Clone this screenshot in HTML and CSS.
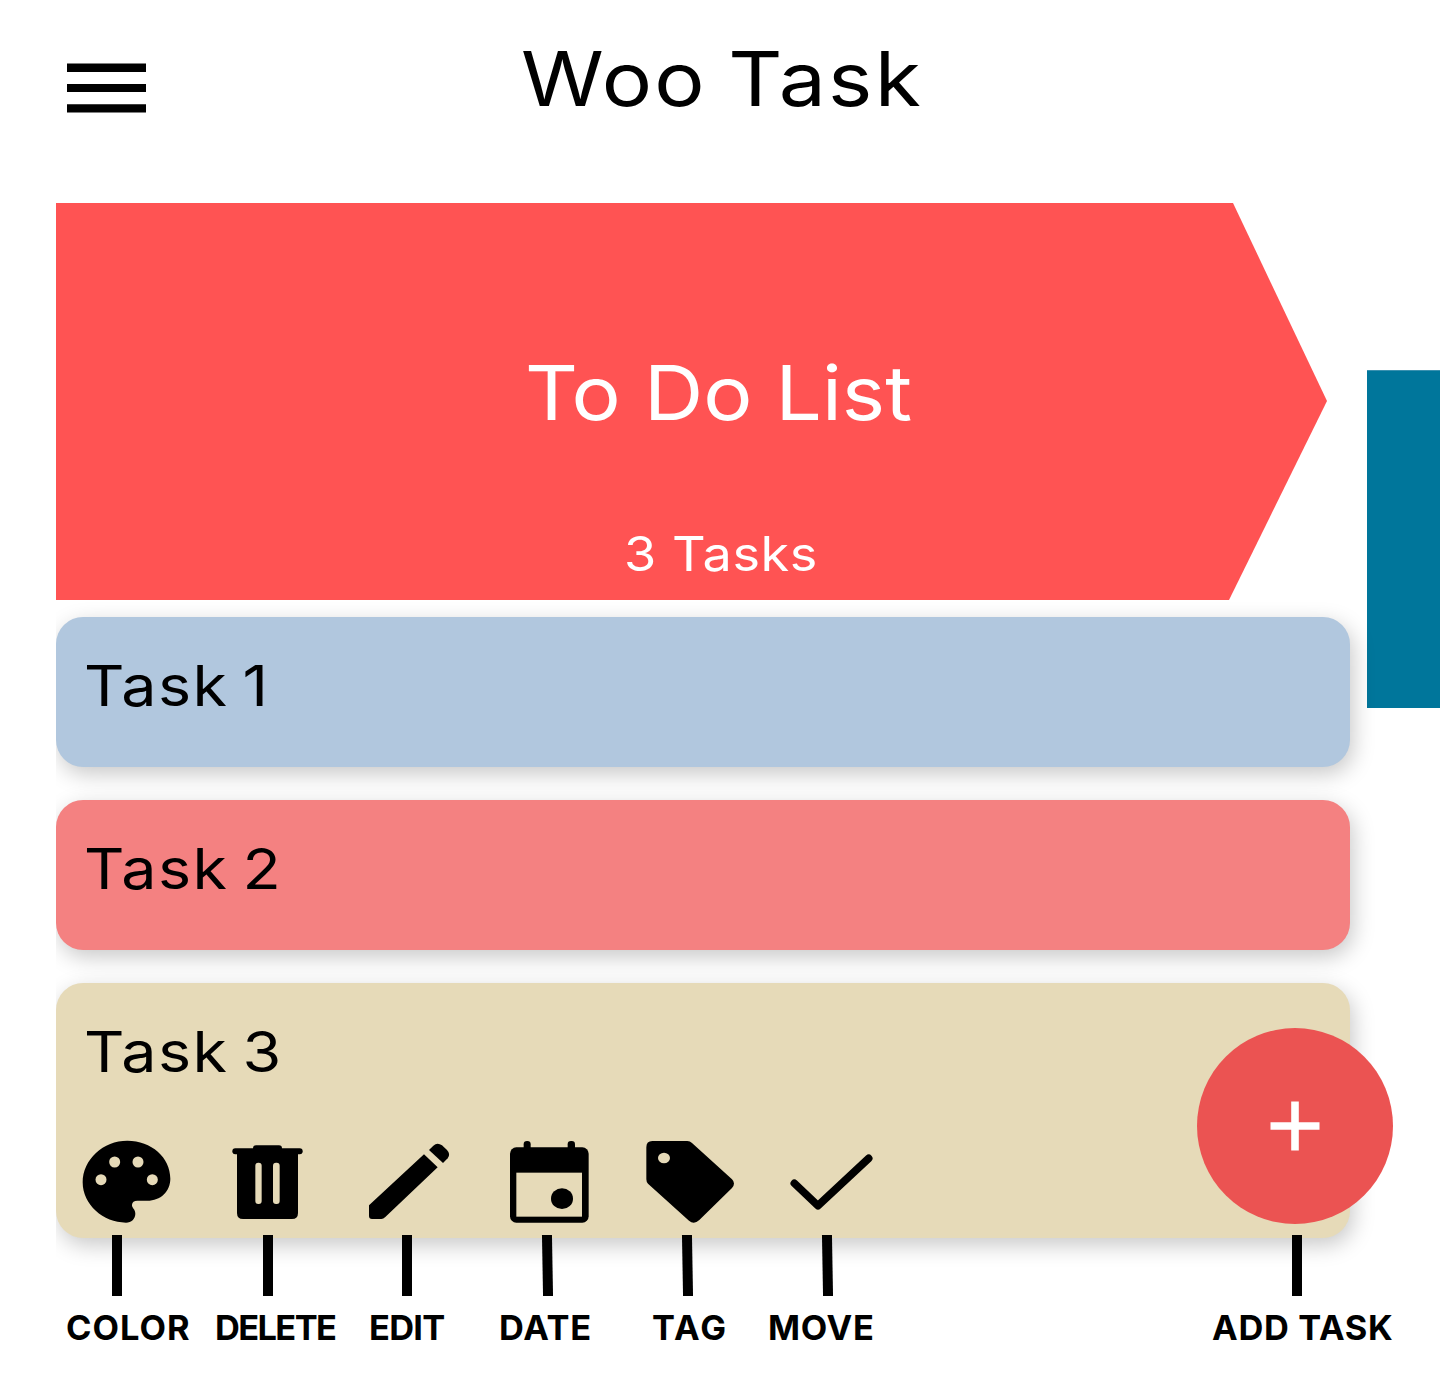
FILE: index.html
```html
<!DOCTYPE html>
<html lang="en">
<head>
<meta charset="utf-8">
<title>Woo Task</title>
<link rel="stylesheet" href="styles.css">
</head>
<body>
<div class="app">
  <header class="header">
    <svg class="menu" viewBox="0 0 79 50"><path d="M0 .5H79V9H0ZM0 21H79V29H0ZM0 41.2H79V49.5H0Z"/></svg>
    <h1 class="title">Woo Task</h1>
  </header>
  <main class="board">
    <div class="column">
      <section class="banner">
        <h2 class="banner-title">To Do List</h2>
        <p class="banner-count">3 Tasks</p>
      </section>
      <div class="tasks">
        <article class="task task-blue"><h3 class="task-name">Task 1</h3></article>
        <article class="task task-pink"><h3 class="task-name">Task 2</h3></article>
        <article class="task task-sand">
          <h3 class="task-name">Task 3</h3>
          <div class="tools">
            <svg class="tool" width="92" viewBox="120 60 276 252">
              <path d="M262 62C190 62 128 118 128 187C128 254 190 308 258 308C274 308 286 296 286 281C286 266 275 264 276 254C277 246 282 242 292 242H322C362 242 391 214 391 176C391 112 334 62 262 62Z"/>
              <g class="hole"><circle cx="224" cy="126" r="16.5"/><circle cx="294" cy="126" r="16.5"/><circle cx="183" cy="179" r="16.5"/><circle cx="337" cy="179" r="16.5"/></g>
            </svg>
            <svg class="tool" width="75" viewBox="570 60 225 252">
              <rect x="639" y="76" width="87" height="24" rx="9"/><rect x="577" y="85" width="211" height="18" rx="9"/>
              <path d="M591 95H774V279Q774 297 756 297H609Q591 297 591 279Z"/>
              <g class="hole"><rect x="646" y="128" width="19" height="124" rx="9"/><rect x="699" y="128" width="20" height="124" rx="9"/></g>
            </svg>
            <svg class="tool" width="87" viewBox="75 60 261 252">
              <path d="M87 256L252 103L293 142L136 291Q130 297 124 297H96Q87 297 87 288Z"/>
              <path d="M267 90L280 77Q292 66 306 76L321 90Q333 103 323 115L309 129Z"/>
            </svg>
            <svg class="tool" width="83" viewBox="504 60 249 252">
              <rect x="551" y="63" width="21" height="40" rx="10"/><rect x="683" y="63" width="22" height="40" rx="10"/>
              <rect x="510" y="82" width="236" height="226" rx="19"/>
              <rect class="hole" x="529" y="158" width="197" height="132"/>
              <ellipse cx="666" cy="236" rx="33" ry="31"/>
            </svg>
            <svg class="tool" width="92" viewBox="72 60 276 252">
              <path d="M97 63H202Q210 63 216 69L336 178Q348 190 336 204L238 300Q222 315 207 302L84 191Q79 186 79 178V82Q79 63 97 63Z"/>
              <ellipse class="hole" cx="132" cy="114" rx="18" ry="16"/>
            </svg>
            <svg class="tool" width="87" viewBox="504 60 261 252">
              <path class="check" d="M523 190L594 257L746 115"/>
            </svg>
          </div>
        </article>
      </div>
    </div>
    <aside class="next-list"></aside>
  </main>
  <footer class="legend">
    <div class="callout color"><i class="tick"></i><span>COLOR</span></div>
    <div class="callout delete"><i class="tick"></i><span>DELETE</span></div>
    <div class="callout edit"><i class="tick"></i><span>EDIT</span></div>
    <div class="callout date"><i class="tick slanted"></i><span>DATE</span></div>
    <div class="callout tag"><i class="tick slanted"></i><span>TAG</span></div>
    <div class="callout move"><i class="tick slanted"></i><span>MOVE</span></div>
    <div class="callout add"><i class="tick"></i><span>ADD TASK</span></div>
  </footer>
  <button class="fab" aria-label="Add task">
    <svg width="50" height="50" viewBox="0 0 50 50"><path d="M21.2 .5H28.8V21.3H49.5V28.7H28.8V49.5H21.2V28.7H.5V21.3H21.2Z"/></svg>
  </button>
</div>
</body>
</html>
```
FILE: styles.css
```css
* { box-sizing: border-box; }
body { margin: 0; background: #fff; color: #000; font-family: Inter, "Open Sans", sans-serif; }
h1, h2, h3, p { margin: 0; font-weight: 400; white-space: nowrap; }
svg { display: block; }

.app { position: relative; width: 1440px; height: 1388px; overflow: hidden; }

.title, .banner-title, .banner-count, .task-name { width: max-content; transform-origin: 0 50%; }

.header { display: flex; height: 203px; padding-left: 67px; }
.menu { width: 79px; height: 50px; margin-top: 63px; }
.title {
  margin-left: 375px; font-size: 75px; line-height: 158px;
  letter-spacing: 2px; word-spacing: -4px; transform: scaleX(1.12);
}

.board { display: flex; align-items: flex-start; gap: 17px; height: 1032px; padding-left: 56px; }
.column { flex: none; width: 1294px; }
.banner {
  width: 1271px; height: 397px; padding-top: 140px; color: #fff; background: #ff5353;
  clip-path: polygon(0 0, 1177px 0, 100% 198px, 1173px 100%, 0 100%);
}
.banner-title { margin-left: 469px; font-size: 75px; line-height: 100px; transform: scaleX(1.095); }
.banner-count {
  margin: 81px 0 0 568px; font-size: 47.5px; line-height: 60px;
  letter-spacing: .5px; transform: scaleX(1.1);
}

.tasks { display: flex; flex-direction: column; gap: 33.2px; padding-top: 17px; clip-path: inset(0 -60px -60px 0); }
.task { height: 150px; border-radius: 27px; padding-left: 27.5px; box-shadow: 3px 7px 22px rgba(0, 0, 0, .22); }
.task-blue { background: #b1c7de; }
.task-pink { background: #f48181; }
.task-sand { height: 254.4px; background: #e6dab8; }
.task-name {
  font-size: 56px; line-height: 138px;
  letter-spacing: 1.3px; word-spacing: -4.5px; transform: scaleX(1.12);
}
.tools { display: grid; grid-template-columns: 150px 135px 143px 136px 144px 87px; margin: 18.6px 0 0 -3.5px; }
.tool { height: 84px; }
.hole { fill: #e6dab8; }
.check { fill: none; stroke: #000; stroke-width: 23; stroke-linecap: round; stroke-linejoin: round; }

.next-list { flex: none; width: 73px; height: 338px; margin-top: 167px; background: #00769b; border-top: 1px solid #3a91b0; }

.legend { position: relative; display: grid; grid-template-columns: 149px 154px 130px 153px 116px 444px 180px; padding-left: 66px; }
.callout { font-size: 34.4px; font-weight: 700; line-height: 64px; white-space: nowrap; }
.callout span { display: block; }
.tick { display: block; width: 10px; height: 61px; background: #000; }
.slanted { transform: translateX(.5px) skewX(1deg); }
.color { letter-spacing: 1px; }
.delete { letter-spacing: -1.6px; }
.edit { letter-spacing: -.7px; }
.date { letter-spacing: .8px; }
.tag { letter-spacing: 2px; }
.move { letter-spacing: .7px; }
.add { letter-spacing: .7px; }
.color .tick { margin-left: 46px; }
.delete .tick { margin-left: 48px; }
.edit .tick { margin-left: 33px; }
.date .tick { margin-left: 43px; }
.tag .tick { margin-left: 30px; }
.move .tick { margin-left: 54px; }
.add .tick { margin-left: 80px; }

.fab {
  position: absolute; left: 1197px; top: 1028px; width: 196px; height: 196px; padding: 0;
  display: flex; align-items: center; justify-content: center;
  border: 0; border-radius: 50%; background: #eb5352;
}
.fab svg { fill: #fff; }
```
